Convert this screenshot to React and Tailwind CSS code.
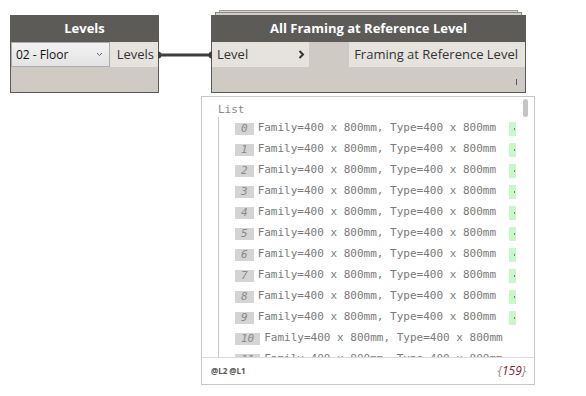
import React from 'react';

const ui = { fontFamily: '"Open Sans", "Noto Sans", sans-serif' };
const mono = { fontFamily: '"DejaVu Sans Mono", "Liberation Mono", monospace' };

const rows = Array.from({ length: 12 }, (_, i) => i);

const Wire = () => (
  <svg className="absolute left-[156px] top-[50px]" width="58" height="10">
    <line x1="2" y1="5" x2="56" y2="5" stroke="#3f3f3f" strokeWidth="3" />
    <path d="M2 1.5 A3.5 3.5 0 0 1 2 8.5 Z" fill="#3f3f3f" />
    <path d="M56 1.5 A3.5 3.5 0 0 0 56 8.5 Z" fill="#3f3f3f" />
  </svg>
);

const LevelsNode = () => (
  <div className="absolute left-[10px] top-[15px] w-[149px] h-[78px] flex flex-col border border-[#5c5b58] bg-[#cfcbc4]" style={ui}>
    <div className="h-[26px] bg-[#5c5b58] flex items-center justify-center text-white font-bold text-[13px]">
      Levels
    </div>
    <div className="h-[25px] flex">
      <div className="w-[99px] flex items-center justify-between pl-[4px] pr-[6px] border border-[#adadad] bg-gradient-to-b from-[#f2f2f2] to-[#e3e3e3] text-[12px] text-[#111]">
        <span>02 - Floor</span>
        <svg width="7" height="5" viewBox="0 0 7 5">
          <path d="M1 1 L3.5 3.5 L6 1" stroke="#666" strokeWidth="1" fill="none" />
        </svg>
      </div>
      <div className="flex-1 flex items-center justify-end pr-[4px] bg-[#e6e3de] text-[13px] text-[#333]">
        Levels
      </div>
    </div>
  </div>
);

const FramingNode = () => (
  <>
    <div className="absolute left-[219px] top-[10px] w-[299px] h-[10px] border border-[#9b9a97] bg-[#d6d3ce]" />
    <div className="absolute left-[215px] top-[12px] w-[307px] h-[10px] border border-[#8a8986] bg-[#d0cdc8]" />
    <div className="absolute left-[211px] top-[15px] w-[315px] h-[78px] flex flex-col border border-[#5c5b58] bg-[#cfcbc4]" style={ui}>
      <div className="h-[26px] bg-[#5c5b58] flex items-center justify-center text-white font-bold text-[13px]">
        All Framing at Reference Level
      </div>
      <div className="h-[25px] flex">
        <div className="w-[97px] flex items-center justify-between pl-[5px] pr-[4px] bg-[#e6e3de] text-[13px] text-[#333]">
          <span>Level</span>
          <svg width="7" height="9" viewBox="0 0 7 9">
            <path d="M1.5 1 L5 4.5 L1.5 8" stroke="#333" strokeWidth="2" fill="none" />
          </svg>
        </div>
        <div className="w-[40px]" />
        <div className="flex-1 flex items-center justify-end pr-[7px] bg-[#e6e3de] text-[13px] text-[#333]">
          Framing at Reference Level
        </div>
      </div>
      <div className="flex-1 flex items-end justify-end pr-[8px] pb-[7px]">
        <div className="w-[1px] h-[6px] bg-[#555]" />
      </div>
    </div>
  </>
);

const Preview = () => (
  <div className="absolute left-[201px] top-[96px] w-[334px] h-[289px] border border-[#c6c6c6] bg-white flex flex-col">
    <div className="relative h-[260px] overflow-hidden">
      <div className="absolute right-[6px] top-[2px] w-[5px] h-[18px] rounded-full bg-[#c4c4c4]" />
      <div className="w-[314px] overflow-hidden pl-[16px] pt-[6px] text-[11px] text-[#7a7a7a]" style={mono}>
        <div className="h-[14px] leading-[14px] text-[#888]">List</div>
        <div className="border-l border-[#c8c8c8] pl-[16px] pt-[1px]">
          {rows.map((i) => (
            <div key={i} className="h-[21px] flex items-center whitespace-nowrap">
              <span className="h-[12px] leading-[12px] px-[6px] bg-[#d4d4d4] italic text-[#8a8a8a]">{i}</span>
              <span className="ml-[4px]">Family=400 x 800mm, Type=400 x 800mm</span>
              <span className="ml-[13px] w-[14px] h-[14px] shrink-0 bg-[#c8f8c8] flex items-center pl-[5px]">
                <span className="w-[1px] h-[2px] bg-[#777]" />
              </span>
            </div>
          ))}
        </div>
      </div>
    </div>
    <div className="flex-1 border-t border-[#dcdcdc] flex items-center justify-between pl-[9px] pr-[8px]">
      <span className="text-[8px] font-bold text-[#555]" style={ui}>@L2 @L1</span>
      <span className="text-[12px] italic text-[#888]" style={ui}>
        {'{'}<span className="text-[#8b1c1c]">159</span>{'}'}
      </span>
    </div>
  </div>
);

export default function App() {
  return (
    <div className="relative w-[586px] h-[396px] bg-white overflow-hidden">
      <LevelsNode />
      <FramingNode />
      <Wire />
      <Preview />
    </div>
  );
}
